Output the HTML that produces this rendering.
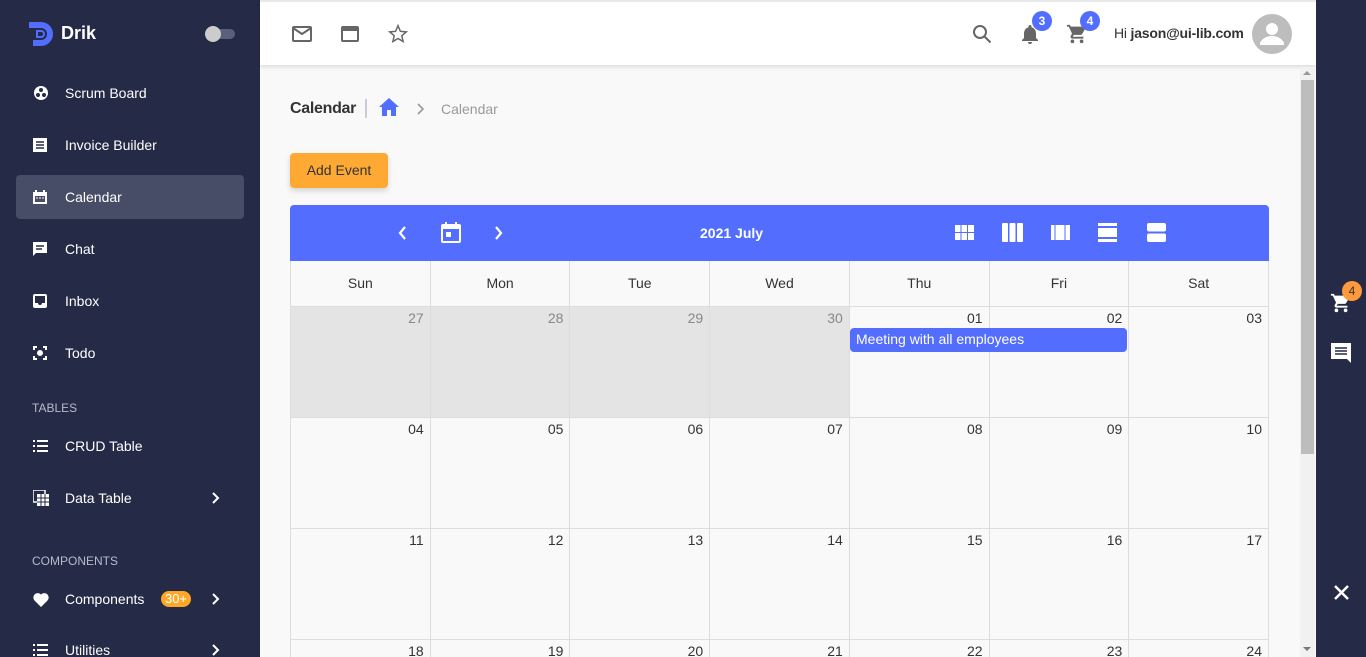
<!DOCTYPE html>
<html style="overflow:hidden;height:657px"><head><meta charset="utf-8"><style>
*{box-sizing:border-box;margin:0;padding:0}
body{width:1366px;height:657px;overflow:hidden;font-family:"Liberation Sans",sans-serif;background:#f9f9f9;position:relative}
#wrap{position:absolute;left:0;top:0;width:1366px;height:657px;overflow:hidden}
.side{position:absolute;left:0;top:0;width:260px;height:657px;background:#252a47;color:#fff}
.item{position:absolute;left:16px;width:228px;height:44px;display:flex;align-items:center;font-size:14px}
.item svg{position:absolute;left:17px}
.item span{position:absolute;left:49px}
.item .chev{position:absolute;left:196px}
.sec{position:absolute;left:32px;font-size:12px;color:#b7bbcb}
.top{position:absolute;left:260px;top:0;width:1056px;height:65px;background:#fff;box-shadow:0 2px 4px rgba(0,0,0,.12);border-top:2px solid #e8e8e8}
.right{position:absolute;left:1316px;top:0;width:50px;height:657px;background:#252a47}
.badge{position:absolute;width:20px;height:20px;border-radius:50%;background:#536dfe;color:#fff;font-size:12px;font-weight:bold;text-align:center;line-height:20px}
.cal{position:absolute;left:290px;top:205px;width:979px;height:452px;overflow:hidden}
.bar{height:56px;background:#536dfe;border-radius:4px 4px 0 0;position:relative;color:#fff}
.grid{display:grid;grid-template-columns:repeat(7,1fr);border-left:1px solid #ddd}
.h{height:46px;border-right:1px solid #ddd;border-bottom:1px solid #ddd;text-align:center;line-height:45px;font-size:14px;color:#333}
.c{height:111px;border-right:1px solid #ddd;border-bottom:1px solid #ddd;text-align:right;padding:3px 6px;font-size:14px;color:#333}
.g{background:#e4e4e4;color:#888}
</style></head><body><div id="wrap">
<div class="side">
 <svg style="position:absolute;left:29px;top:22px" width="24" height="24" viewBox="0 0 24 24"><path d="M0 0h12a12 12 0 0 1 0 24H4v-6h8a6 6 0 0 0 0-12H0z" fill="#536dfe"/><path d="M7 8h5a4 4 0 0 1 0 8H7z" fill="#536dfe"/><path d="M9 10h3a2 2 0 0 1 0 4H9z" fill="#252a47"/></svg>
 <div style="position:absolute;left:61px;top:23px;font-size:18px;font-weight:bold">Drik</div>
 <div style="position:absolute;left:207px;top:29px;width:28px;height:10px;border-radius:5px;background:#5b607a"></div>
 <div style="position:absolute;left:205px;top:26px;width:16px;height:16px;border-radius:50%;background:#ccc"></div>
 <div class="item" style="top:71px"><svg width="16" height="16" viewBox="0 0 16 16"><circle cx="8" cy="8" r="7" fill="#fff"/><circle cx="8" cy="5" r="2" fill="#252a47"/><circle cx="5" cy="10" r="2" fill="#252a47"/><circle cx="11" cy="10" r="2" fill="#252a47"/></svg><span>Scrum Board</span></div>
 <div class="item" style="top:123px"><svg width="14" height="14" viewBox="0 0 14 14"><rect width="14" height="14" fill="#fff"/><path d="M3 4h8M3 7h8M3 10h8" stroke="#252a47" stroke-width="1.5"/></svg><span>Invoice Builder</span></div>
 <div class="item" style="top:175px;background:#474d66;border-radius:4px"><svg width="14" height="14" viewBox="0 0 14 14"><rect y="2" width="14" height="12" fill="#fff"/><rect x="2" y="0" width="2" height="3" fill="#fff"/><rect x="10" y="0" width="2" height="3" fill="#fff"/><rect x="2" y="6" width="10" height="6" fill="#474d66"/><path d="M3 8h2M6 8h2M9 8h2" stroke="#fff"/></svg><span>Calendar</span></div>
 <div class="item" style="top:227px"><svg width="14" height="14" viewBox="0 0 14 14"><path d="M0 0h14v11H3l-3 3z" fill="#fff"/><path d="M3 4h8M3 7h6" stroke="#252a47" stroke-width="1.5"/></svg><span>Chat</span></div>
 <div class="item" style="top:279px"><svg width="14" height="14" viewBox="0 0 14 14"><rect width="14" height="14" rx="2" fill="#fff"/><path d="M2 2h10v7H9a2 2 0 0 1-4 0H2z" fill="#252a47"/></svg><span>Inbox</span></div>
 <div class="item" style="top:331px"><svg width="14" height="14" viewBox="0 0 14 14" fill="none" stroke="#fff" stroke-width="2"><path d="M1 4V1h3M10 1h3v3M13 10v3h-3M4 13H1v-3"/><circle cx="7" cy="7" r="2" fill="#fff"/></svg><span>Todo</span></div>
 <div class="sec" style="top:401px">TABLES</div>
 <div class="item" style="top:424px"><svg width="15" height="12" viewBox="0 0 15 12" stroke="#fff" stroke-width="2"><path d="M0 1h2M4 1h11M0 6h2M4 6h11M0 11h2M4 11h11"/></svg><span>CRUD Table</span></div>
 <div class="item" style="top:476px"><svg width="16" height="16" viewBox="0 0 16 16"><rect x="0" y="0" width="12" height="12" fill="none" stroke="#fff" stroke-width="1.5"/><rect x="4" y="4" width="12" height="12" fill="#fff"/><path d="M8 4v12M12 4v12M4 8h12M4 12h12" stroke="#252a47"/></svg><span>Data Table</span><svg class="chev" width="8" height="12" viewBox="0 0 8 12"><path d="M1 1l5 5-5 5" stroke="#fff" stroke-width="2" fill="none"/></svg></div>
 <div class="sec" style="top:554px">COMPONENTS</div>
 <div class="item" style="top:577px"><svg width="16" height="15" viewBox="0 0 16 15"><path d="M8 15L1.5 8.5A4 4 0 0 1 8 2.5a4 4 0 0 1 6.5 6z" fill="#fff"/></svg><span>Components</span><div style="position:absolute;left:145px;top:14px;width:30px;height:16px;border-radius:8px;background:#ffa726;font-size:13px;text-align:center;line-height:16px">30+</div><svg class="chev" width="8" height="12" viewBox="0 0 8 12"><path d="M1 1l5 5-5 5" stroke="#fff" stroke-width="2" fill="none"/></svg></div>
 <div class="item" style="top:628px"><svg width="15" height="12" viewBox="0 0 15 12" stroke="#fff" stroke-width="2"><path d="M0 1h2M4 1h11M0 6h2M4 6h11M0 11h2M4 11h11"/></svg><span>Utilities</span><svg class="chev" width="8" height="12" viewBox="0 0 8 12"><path d="M1 1l5 5-5 5" stroke="#fff" stroke-width="2" fill="none"/></svg></div>
</div>
<div class="top">
 <svg style="position:absolute;left:32px;top:24px" width="20" height="16" viewBox="0 0 20 16" fill="none" stroke="#666" stroke-width="2"><rect x="1" y="1" width="18" height="14" rx="1"/><path d="M1 2l9 6 9-6"/></svg>
 <svg style="position:absolute;left:81px;top:24px" width="18" height="16" viewBox="0 0 18 16"><rect x="1" y="1" width="16" height="14" rx="1" fill="none" stroke="#666" stroke-width="2"/><rect x="1" y="1" width="16" height="4" fill="#666"/></svg>
 <svg style="position:absolute;left:128px;top:22px" width="20" height="19" viewBox="0 0 24 23"><path d="M12 2l2.9 6.9 7.1.6-5.4 4.7 1.6 7-6.2-3.7-6.2 3.7 1.6-7L2 9.5l7.1-.6z" fill="none" stroke="#666" stroke-width="1.8"/></svg>
 <svg style="position:absolute;left:712px;top:22px" width="20" height="20" viewBox="0 0 20 20" fill="none" stroke="#666" stroke-width="2"><circle cx="8" cy="8" r="6"/><path d="M12.5 12.5l6 6"/></svg>
 <svg style="position:absolute;left:760px;top:21px" width="20" height="22" viewBox="0 0 20 22"><path d="M10 2a1.5 1.5 0 0 1 1.5 1.5v.7A6 6 0 0 1 16 10v5l2 2v1H2v-1l2-2v-5a6 6 0 0 1 4.5-5.8v-.7A1.5 1.5 0 0 1 10 2zM8 19h4a2 2 0 0 1-4 0z" fill="#666"/></svg>
 <div class="badge" style="left:772px;top:9px">3</div>
 <svg style="position:absolute;left:806px;top:21px" width="22" height="22" viewBox="0 0 24 24"><path d="M7 18a2 2 0 1 0 0 4 2 2 0 0 0 0-4zM1 2v2h2l3.6 7.6-1.4 2.4A2 2 0 0 0 7 17h12v-2H7.4l1.1-2h7.5a2 2 0 0 0 1.7-1l3.6-6.5A1 1 0 0 0 20.4 4H5.2l-.9-2zm16 16a2 2 0 1 0 0 4 2 2 0 0 0 0-4z" fill="#666"/></svg>
 <div class="badge" style="left:820px;top:9px">4</div>
 <div style="position:absolute;left:854px;top:23px;font-size:14px;color:#333;letter-spacing:-0.2px">Hi <b>jason@ui-lib.com</b></div>
 <div style="position:absolute;left:992px;top:12px;width:40px;height:40px;border-radius:50%;background:#bdbdbd;overflow:hidden"><svg width="40" height="40" viewBox="0 0 40 40"><circle cx="20" cy="15" r="6" fill="#fff"/><path d="M8 29c2-5 8-7 12-7s10 2 12 7v2H8z" fill="#fff"/></svg></div>
</div>
<div style="position:absolute;left:1300px;top:67px;width:15px;height:590px;background:#f1f1f1"></div>
<div style="position:absolute;left:1301px;top:80px;width:13px;height:374px;background:#bdbdbd"></div>
<div style="position:absolute;left:1303px;top:71px;border:4px solid transparent;border-bottom-color:#999;border-top:0"></div>
<div style="position:absolute;left:1303px;top:647px;border:4px solid transparent;border-top-color:#777;border-bottom:0"></div>
<div class="right">
 <svg style="position:absolute;left:14px;top:292px" width="22" height="22" viewBox="0 0 24 24"><path d="M7 18a2 2 0 1 0 0 4 2 2 0 0 0 0-4zM1 2v2h2l3.6 7.6-1.4 2.4A2 2 0 0 0 7 17h12v-2H7.4l1.1-2h7.5a2 2 0 0 0 1.7-1l3.6-6.5A1 1 0 0 0 20.4 4H5.2l-.9-2zm16 16a2 2 0 1 0 0 4 2 2 0 0 0 0-4z" fill="#fff"/></svg>
 <div class="badge" style="left:26px;top:281px;background:#ff9a3c;color:#333;font-weight:normal">4</div>
 <svg style="position:absolute;left:15px;top:343px" width="20" height="20" viewBox="0 0 20 20"><path d="M0 0h20v20l-4-4H0z" fill="#fff"/><path d="M4 5h12M4 8h12M4 11h12" stroke="#252a47" stroke-width="1.5"/></svg>
 <svg style="position:absolute;left:18px;top:585px" width="15" height="15" viewBox="0 0 15 15"><path d="M1 1l13 13M14 1L1 14" stroke="#fff" stroke-width="2.5"/></svg>
</div>
<div style="position:absolute;left:290px;top:100px;font-size:16px;font-weight:bold;color:#333;letter-spacing:-0.3px">Calendar</div>
<div style="position:absolute;left:365px;top:99px;width:2px;height:19px;background:#c8ccd8"></div>
<svg style="position:absolute;left:379px;top:98px" width="20" height="18" viewBox="0 0 20 18"><path d="M10 0L0 9h3v9h5v-6h4v6h5V9h3z" fill="#536dfe"/></svg>
<svg style="position:absolute;left:417px;top:103px" width="8" height="12" viewBox="0 0 8 12"><path d="M1 1l5 5-5 5" stroke="#999" stroke-width="1.6" fill="none"/></svg>
<div style="position:absolute;left:441px;top:101px;font-size:14px;color:#999">Calendar</div>
<div style="position:absolute;left:290px;top:153px;width:98px;height:35px;background:#ffa935;border-radius:4px;box-shadow:0 3px 6px rgba(0,0,0,.15);font-size:14px;color:#333;text-align:center;line-height:35px">Add Event</div>
<div class="cal">
 <div class="bar">
  <svg style="position:absolute;left:108px;top:21px" width="9" height="14" viewBox="0 0 9 14"><path d="M7 1L2 7l5 6" stroke="#fff" stroke-width="2.2" fill="none"/></svg>
  <svg style="position:absolute;left:151px;top:17px" width="20" height="21" viewBox="0 0 20 21"><rect x="1" y="3" width="18" height="17" rx="1" fill="none" stroke="#fff" stroke-width="2"/><rect x="1" y="3" width="18" height="4" fill="#fff"/><rect x="4" y="0" width="2" height="4" fill="#fff"/><rect x="14" y="0" width="2" height="4" fill="#fff"/><rect x="5" y="10" width="5" height="5" fill="#fff"/></svg>
  <svg style="position:absolute;left:204px;top:21px" width="9" height="14" viewBox="0 0 9 14"><path d="M2 1l5 6-5 6" stroke="#fff" stroke-width="2.2" fill="none"/></svg>
  <div style="position:absolute;left:410px;top:20px;font-size:14px;font-weight:bold">2021 July</div>
  <svg style="position:absolute;left:665px;top:20px" width="19" height="15" viewBox="0 0 19 15" fill="#fff"><rect width="5.5" height="7"/><rect x="6.5" width="5.5" height="7"/><rect x="13" width="6" height="7"/><rect y="8" width="5.5" height="7"/><rect x="6.5" y="8" width="5.5" height="7"/><rect x="13" y="8" width="6" height="7"/></svg>
  <svg style="position:absolute;left:712px;top:18px" width="21" height="19" viewBox="0 0 21 19" fill="#fff"><rect width="6" height="19" rx="1"/><rect x="7.5" width="6" height="19" rx="1"/><rect x="15" width="6" height="19" rx="1"/></svg>
  <svg style="position:absolute;left:761px;top:20px" width="19" height="15" viewBox="0 0 19 15" fill="#fff"><rect width="3.5" height="15"/><rect x="4.5" width="9" height="15"/><rect x="14.5" width="4.5" height="15"/></svg>
  <svg style="position:absolute;left:808px;top:18px" width="19" height="19" viewBox="0 0 19 19" fill="#fff"><rect width="19" height="3"/><rect y="5" width="19" height="9"/><rect y="16" width="19" height="3"/></svg>
  <svg style="position:absolute;left:857px;top:18px" width="19" height="19" viewBox="0 0 19 19" fill="#fff"><rect width="19" height="8.5" rx="2"/><rect y="10.5" width="19" height="8.5" rx="2"/></svg>
 </div>
 <div class="grid">
  <div class="h">Sun</div><div class="h">Mon</div><div class="h">Tue</div><div class="h">Wed</div><div class="h">Thu</div><div class="h">Fri</div><div class="h">Sat</div>
  <div class="c g">27</div><div class="c g">28</div><div class="c g">29</div><div class="c g">30</div><div class="c">01</div><div class="c">02</div><div class="c">03</div>
  <div class="c">04</div><div class="c">05</div><div class="c">06</div><div class="c">07</div><div class="c">08</div><div class="c">09</div><div class="c">10</div>
  <div class="c">11</div><div class="c">12</div><div class="c">13</div><div class="c">14</div><div class="c">15</div><div class="c">16</div><div class="c">17</div>
  <div class="c">18</div><div class="c">19</div><div class="c">20</div><div class="c">21</div><div class="c">22</div><div class="c">23</div><div class="c">24</div>
 </div>
</div>
<div style="position:absolute;left:850px;top:328px;width:277px;height:24px;background:#536dfe;border-radius:4px;color:#fff;font-size:14px;line-height:23px;padding-left:6px">Meeting with all employees</div>
</div></body></html>
